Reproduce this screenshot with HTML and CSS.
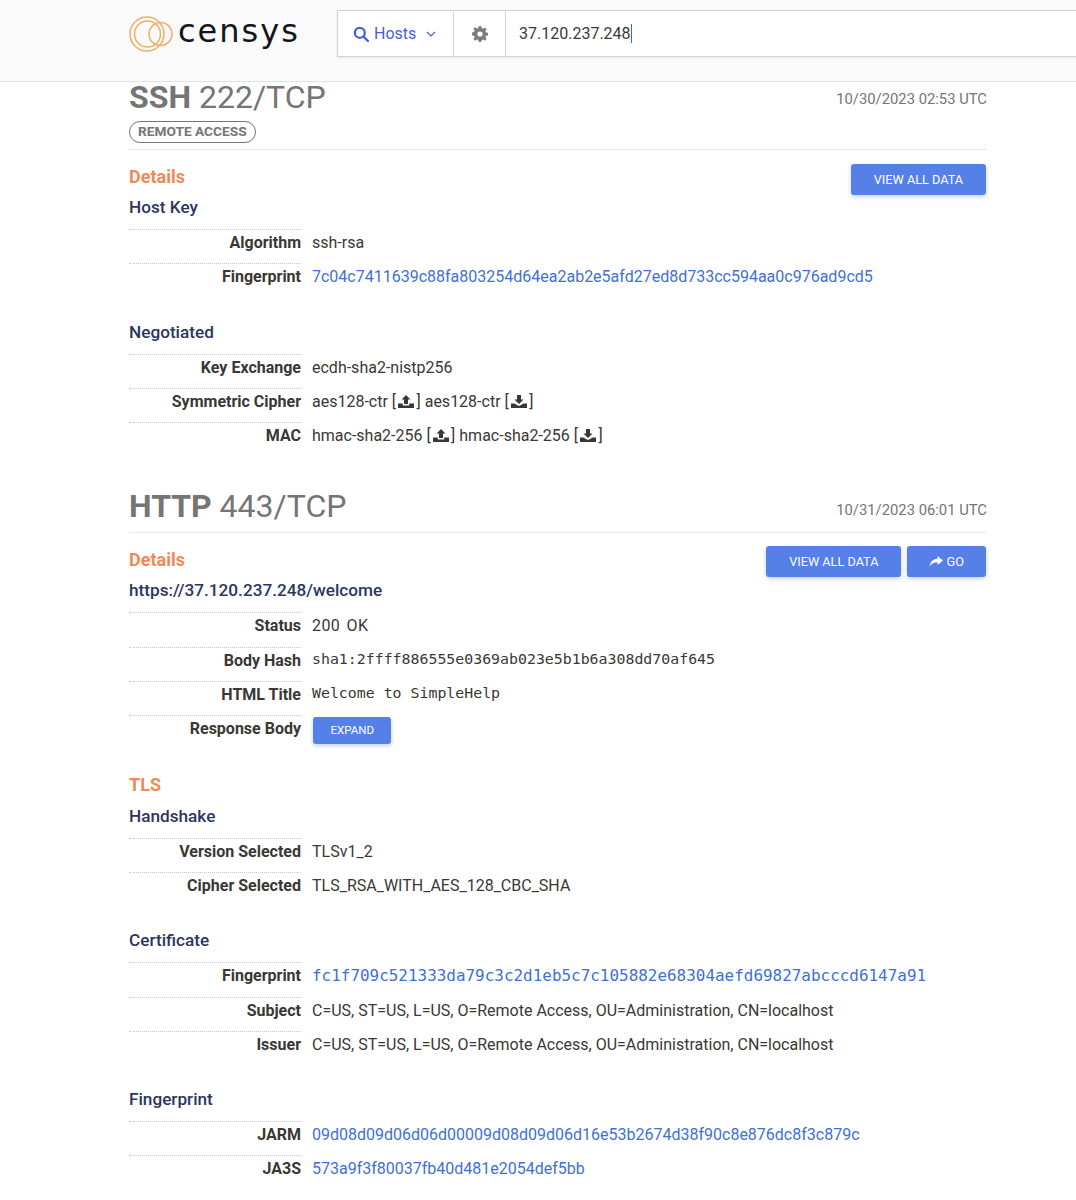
FILE: index.html
```html
<!DOCTYPE html>
<html lang="en">
<head>
<meta charset="utf-8">
<title>Censys host</title>
<link rel="stylesheet" href="styles.css">
</head>
<body>
<header class="topbar">
  <div class="logo">
    <svg class="logo-mark" width="44" height="38" viewBox="0 0 44 38" fill="none" stroke="#eeb06c" stroke-width="1.600"><circle cx="18" cy="19" r="17"/><circle cx="18.500" cy="19" r="13"/><circle cx="31.500" cy="19" r="11.500"/></svg>
    <span class="logo-text">censys</span>
  </div>
  <div class="search">
    <div class="search-type">
      <svg width="16" height="16" viewBox="0 0 16 16" fill="none" stroke="#3f5fe0" stroke-width="2.200"><circle cx="6.800" cy="6.800" r="5"/><path d="M10.500 10.500 15 15" stroke-linecap="round"/></svg>
      <span>Hosts</span>
      <svg class="chev" width="10" height="6" viewBox="0 0 10 6" fill="none" stroke="#3f5fe0" stroke-width="1.200"><path d="M1 1l4 4 4-4"/></svg>
    </div>
    <div class="search-gear">
      <svg width="16" height="16" viewBox="0 0 16 16"><path fill="#7d7d7d" fill-rule="evenodd" d="M6.700 0h2.600l.4 2.100 1.300.6L12.800 1.500l1.800 1.800-1.200 1.800.6 1.300 2 .4v2.600l-2 .4-.6 1.300 1.200 1.800-1.800 1.800-1.800-1.200-1.300.6-.4 2.100H6.700l-.4-2.100-1.300-.6-1.800 1.200-1.800-1.800 1.200-1.800-.6-1.300-2-.4V6.400l2-.4.6-1.300-1.200-1.800 1.800-1.800L5 2.700l1.300-.6zM8 5.400a2.600 2.600 0 1 0 0 5.200 2.600 2.600 0 0 0 0-5.200z"/></svg>
    </div>
    <div class="search-input"><span>37.120.237.248</span><i class="caret"></i></div>
  </div>
</header>

<main class="content">
  <section class="service first">
    <div class="service-head">
      <h2 class="service-title"><b>SSH</b> 222/TCP</h2>
      <time class="stamp">10/30/2023 02:53 UTC</time>
    </div>
    <div class="tags"><span class="pill">REMOTE ACCESS</span></div>
    <div class="rule"></div>
    <div class="details-head">
      <h3 class="orange">Details</h3>
      <div class="btns"><a class="btn">VIEW ALL DATA</a></div>
    </div>
    <h4 class="sub">Host Key</h4>
    <dl class="rows">
      <div class="row"><dt>Algorithm</dt><dd>ssh-rsa</dd></div>
      <div class="row"><dt>Fingerprint</dt><dd class="link">7c04c7411639c88fa803254d64ea2ab2e5afd27ed8d733cc594aa0c976ad9cd5</dd></div>
    </dl>
    <h4 class="sub gap">Negotiated</h4>
    <dl class="rows">
      <div class="row"><dt>Key Exchange</dt><dd>ecdh-sha2-nistp256</dd></div>
      <div class="row"><dt>Symmetric Cipher</dt><dd>aes128-ctr [<svg class="ico" width="16" height="13" viewBox="0 0 16 13"><path fill="#3a3735" d="M8 0l4.500 4.500H10V9H6V4.500H3.500zM0 8.500h4.800V10.500h6.400V8.500H16V13H0z"/></svg>] aes128-ctr [<svg class="ico" width="16" height="13" viewBox="0 0 16 13"><path fill="#3a3735" d="M6 0h4v4.500h2.500L8 9 3.500 4.500H6zM0 8.500h3.300L8 11l4.700-2.500H16V13H0z"/></svg>]</dd></div>
      <div class="row"><dt>MAC</dt><dd>hmac-sha2-256 [<svg class="ico" width="16" height="13" viewBox="0 0 16 13"><path fill="#3a3735" d="M8 0l4.500 4.500H10V9H6V4.500H3.500zM0 8.500h4.800V10.500h6.400V8.500H16V13H0z"/></svg>] hmac-sha2-256 [<svg class="ico" width="16" height="13" viewBox="0 0 16 13"><path fill="#3a3735" d="M6 0h4v4.500h2.500L8 9 3.500 4.500H6zM0 8.500h3.300L8 11l4.700-2.500H16V13H0z"/></svg>]</dd></div>
    </dl>
  </section>

  <section class="service">
    <div class="service-head">
      <h2 class="service-title"><b>HTTP</b> 443/TCP</h2>
      <time class="stamp">10/31/2023 06:01 UTC</time>
    </div>
    <div class="rule"></div>
    <div class="details-head">
      <h3 class="orange">Details</h3>
      <div class="btns"><a class="btn">VIEW ALL DATA</a><a class="btn btn-go"><svg width="14" height="11" viewBox="0 0 14 11"><path fill="#fff" d="M8.500 0 14 4.500 8.500 9V6.300C5 6.300 2.500 7.300 .6 10.500 1 6.500 3.500 3 8.500 2.700z"/></svg> GO</a></div>
    </div>
    <h4 class="sub">https://37.120.237.248/welcome</h4>
    <dl class="rows">
      <div class="row"><dt>Status</dt><dd class="spaced">200 OK</dd></div>
      <div class="row"><dt>Body Hash</dt><dd class="mono">sha1:2ffff886555e0369ab023e5b1b6a308dd70af645</dd></div>
      <div class="row"><dt>HTML Title</dt><dd class="mono">Welcome to SimpleHelp</dd></div>
      <div class="row"><dt>Response Body</dt><dd><a class="btn btn-small">EXPAND</a></dd></div>
    </dl>
    <h3 class="orange tls">TLS</h3>
    <h4 class="sub">Handshake</h4>
    <dl class="rows">
      <div class="row"><dt>Version Selected</dt><dd>TLSv1_2</dd></div>
      <div class="row"><dt>Cipher Selected</dt><dd>TLS_RSA_WITH_AES_128_CBC_SHA</dd></div>
    </dl>
    <h4 class="sub gap">Certificate</h4>
    <dl class="rows">
      <div class="row"><dt>Fingerprint</dt><dd class="link mono-lg">fc1f709c521333da79c3c2d1eb5c7c105882e68304aefd69827abcccd6147a91</dd></div>
      <div class="row"><dt>Subject</dt><dd>C=US, ST=US, L=US, O=Remote Access, OU=Administration, CN=localhost</dd></div>
      <div class="row"><dt>Issuer</dt><dd>C=US, ST=US, L=US, O=Remote Access, OU=Administration, CN=localhost</dd></div>
    </dl>
    <h4 class="sub gap">Fingerprint</h4>
    <dl class="rows">
      <div class="row"><dt>JARM</dt><dd class="link">09d08d09d06d06d00009d08d09d06d16e53b2674d38f90c8e876dc8f3c879c</dd></div>
      <div class="row"><dt>JA3S</dt><dd class="link">573a9f3f80037fb40d481e2054def5bb</dd></div>
    </dl>
  </section>
</main>
</body>
</html>
```
FILE: styles.css
```css
* { box-sizing: border-box; }
html, body { margin: 0; padding: 0; background: #fff; }
body { font-family: Roboto, "Liberation Sans", sans-serif; font-size: 16px; color: #3a3735; height: 1200px; overflow: hidden; }

.topbar { height: 82px; background: #fafafa; border-bottom: 1px solid #dfe1e8; display: flex; align-items: flex-start; padding: 10px 0 0 129px; }
.logo { display: flex; align-items: center; width: 208px; height: 47px; }
.logo-mark { flex: none; margin-right: 5px; }
.logo-text { font-family: "DejaVu Sans", sans-serif; font-size: 32px; font-weight: 400; color: #14141c; line-height: 47px; letter-spacing: 2px; padding-bottom: 5px; }
.search { flex: 1; display: flex; height: 47px; background: #fff; border: 1px solid #d4d4d8; border-right: none; box-shadow: 0 1px 2px rgba(0,0,0,.08); }
.search-type { width: 116px; display: flex; align-items: center; padding-left: 15px; color: #3f5fe0; border-right: 1px solid #d4d4d8; }
.search-type span { margin-left: 5px; }
.chev { margin-left: 10px; }
.search-gear { width: 52px; display: flex; align-items: center; justify-content: center; border-right: 1px solid #d4d4d8; }
.search-input { flex: 1; display: flex; align-items: center; padding-left: 13px; color: #3a3a3a; }
.caret { width: 1px; height: 19px; background: #3f5fe0; }

.content { padding: 0 89px 0 129px; }
.service-head { display: flex; justify-content: space-between; align-items: flex-end; }
.service-title { margin: 0; font-size: 32px; line-height: 40px; font-weight: 400; color: #757575; }
.service-title b { font-weight: 700; }
.first .service-head { margin-top: -5px; height: 33px; align-items: flex-start; }
.stamp { font-size: 14.800px; color: #757575; line-height: 20px; }
.first .stamp { margin-top: 12px; }
.service:not(.first) { margin-top: 32px; }
.service:not(.first) .service-head { height: 38px; }
.service:not(.first) .stamp { margin-bottom: 6px; }
.tags { margin-top: 11px; height: 22px; display: flex; }
.pill { display: inline-block; height: 22px; line-height: 19px; padding: 0 8px; border: 1px solid #757575; border-radius: 11px; font-size: 13.700px; font-weight: 700; color: #757575; }
.rule { height: 1px; background: #e6e6e6; margin-top: 6px; }

.details-head { display: flex; justify-content: space-between; align-items: flex-start; margin-top: 15px; height: 30px; }
.orange { margin: 0; color: #ef8a58; font-size: 18px; font-weight: 700; line-height: 24px; }
.btns { display: flex; gap: 6px; padding-right: 1px; margin-top: -1px; }
.service:not(.first) .btns { margin-top: -2px; }
.btn { display: inline-block; height: 31px; line-height: 31px; padding: 0 23px; background: #5580e8; color: #fff; font-size: 12.700px; font-weight: 400; border-radius: 3px; box-shadow: 0 2px 4px rgba(85,128,232,.35); }
.btn-go { padding: 0 22px; }
.btn-go svg { vertical-align: -1px; }
.btn-small { height: 27px; line-height: 27px; padding: 0 17.500px; font-size: 11.500px; margin: 0 0 0 1px; }
.sub { margin: 0; color: #2c3560; font-size: 17.200px; font-weight: 500; line-height: 24px; }
.sub.gap { margin-top: 22px; }
.tls { margin-top: 23px; height: 31px; }

.rows { margin: 10px 0 0; }
.row { display: flex; height: 34.300px; }
dt { width: 172px; flex: none; text-align: right; font-weight: 700; line-height: 25px; border-top: 1px dotted #c8c8c8; }
dd { margin: 0 0 0 11px; line-height: 25px; white-space: nowrap; padding-top: 1px; }
.link { color: #3f6fd8; }
.spaced { word-spacing: 2px; letter-spacing: .4px; }
.mono { font-family: "DejaVu Sans Mono", monospace; font-size: 14.880px; padding-top: 0; }
.mono-lg { font-family: "DejaVu Sans Mono", monospace; font-size: 15.950px; }
.ico { vertical-align: -1px; margin: 0 2.200px; }
```
